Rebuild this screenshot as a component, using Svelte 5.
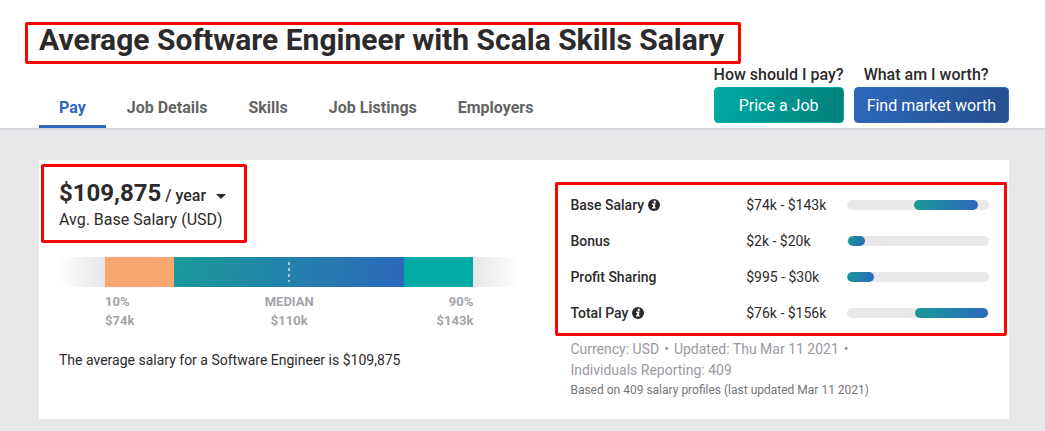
<script>
  const tabs = ['Pay', 'Job Details', 'Skills', 'Job Listings', 'Employers'];

  const actions = [
    { question: 'How should I pay?', label: 'Price a Job', kind: 'teal' },
    { question: 'What am I worth?', label: 'Find market worth', kind: 'blue' }
  ];

  // start and size are percentages of the track
  const rows = [
    { name: 'Base Salary', info: true, range: '$74k - $143k', start: 47, size: 45 },
    { name: 'Bonus', info: false, range: '$2k - $20k', start: 1, size: 12 },
    { name: 'Profit Sharing', info: false, range: '$995 - $30k', start: 0, size: 19 },
    { name: 'Total Pay', info: true, range: '$76k - $156k', start: 48, size: 51 }
  ];

  let active = $state('Pay');
</script>

<header>
  <h1 class="marked">Average Software Engineer with Scala Skills Salary</h1>

  <div class="bar">
    <nav>
      {#each tabs as tab}
        <a href="#{tab}" class:active={active === tab} onclick={() => (active = tab)}>{tab}</a>
      {/each}
    </nav>

    <div class="actions">
      {#each actions as action}
        <div class="action">
          <span>{action.question}</span>
          <button class={action.kind} type="button">{action.label}</button>
        </div>
      {/each}
    </div>
  </div>
</header>

<main>
  <section class="card">
    <div class="summary">
      <div class="marked average">
        <div class="amount">
          <strong>$109,875</strong>
          <button class="period" type="button">
            / year
            <svg width="10" height="5" viewBox="0 0 10 5" aria-hidden="true">
              <path d="M0 0h10L5 5z" fill="currentColor" />
            </svg>
          </button>
        </div>
        <p>Avg. Base Salary (USD)</p>
      </div>

      <div class="scale">
        <div class="fade-in"></div>
        <div class="low"></div>
        <div class="middle"><i></i></div>
        <div class="high"></div>
        <div class="fade-out"></div>
      </div>

      <div class="percentiles">
        <div>10%<br />$74k</div>
        <div>MEDIAN<br />$110k</div>
        <div>90%<br />$143k</div>
      </div>

      <p class="sentence">The average salary for a Software Engineer is $109,875</p>
    </div>

    <div class="details">
      <div class="marked ranges">
        <table>
          <tbody>
            {#each rows as row}
              <tr>
                <th scope="row">
                  {row.name}
                  {#if row.info}
                    <svg width="12" height="12" viewBox="0 0 12 12" aria-hidden="true">
                      <circle cx="6" cy="6" r="6" fill="#2d2a2b" />
                      <circle cx="6.7" cy="2.8" r="1.2" fill="#fff" />
                      <path d="M4.2 4.6h3.3L6.8 8.3h.9l-.2 1.3H3.9l.2-1.3h.7l.5-2.4h-1.3z" fill="#fff" />
                    </svg>
                  {/if}
                </th>
                <td class="range">{row.range}</td>
                <td>
                  <div class="track">
                    <div class="fill" style="margin-left: {row.start}%; width: {row.size}%"></div>
                  </div>
                </td>
              </tr>
            {/each}
          </tbody>
        </table>
      </div>

      <ul class="facts">
        <li>Currency: USD</li>
        <li>Updated: Thu Mar 11 2021</li>
        <li>Individuals Reporting: 409</li>
      </ul>
      <p class="source">Based on 409 salary profiles (last updated Mar 11 2021)</p>
    </div>
  </section>
</main>

<style>
  :global(body) {
    background: #e8e8ea;
    color: #2d2a2b;
    font-family: Roboto, sans-serif;
    font-size: 14px;
  }

  p {
    margin: 0;
  }

  button {
    font: inherit;
    cursor: pointer;
  }

  .marked {
    border: 3px solid #ff0000;
    border-radius: 2px;
  }

  header {
    padding: 22px 36px 0 39px;
    border-bottom: 2px solid #d8d8dc;
    background: #fff;
  }

  h1 {
    width: fit-content;
    margin: 0 0 0 -14px;
    padding: 0 14px 6px 11px;
    font-size: 30px;
    font-weight: 700;
    line-height: 30px;
  }

  .bar {
    display: flex;
    align-items: flex-end;
    justify-content: space-between;
  }

  nav {
    display: flex;
    gap: 1px;
  }

  nav a {
    padding: 8px 20px 7px;
    border-bottom: 3px solid transparent;
    color: #646464;
    font-size: 16px;
    font-weight: 700;
    line-height: 20px;
    text-decoration: none;
  }

  nav a.active {
    border-color: #2d68bd;
    color: #2d68bd;
  }

  .actions {
    display: flex;
    gap: 10px;
    padding-bottom: 5px;
  }

  .action {
    display: flex;
    flex-direction: column;
    gap: 2px;
    font-size: 16px;
    font-weight: 500;
    line-height: 21px;
  }

  .action + .action span {
    padding-left: 10px;
  }

  .action button {
    height: 36px;
    padding: 0 12px;
    border: 1px solid;
    border-radius: 4px;
    color: #fff;
    font-weight: 400;
  }

  .action .teal {
    border-color: #00a9a3;
    background: linear-gradient(105deg, #00aba5, #007f79);
  }

  .action .blue {
    border-color: #2d68bd;
    background: linear-gradient(105deg, #2d68bd, #244f8c);
  }

  main {
    padding: 30px 36px 12px 39px;
  }

  .card {
    display: grid;
    grid-template-columns: 11fr 10fr;
    gap: 51px;
    padding: 4px 20px 20px;
    background: #fff;
  }

  .average {
    width: fit-content;
    margin-left: -18px;
    padding: 12px 18px 8px 15px;
    font-size: 16px;
    line-height: 25px;
  }

  .amount {
    display: flex;
    align-items: baseline;
    gap: 4px;
    line-height: 28px;
  }

  .amount strong {
    font-size: 24px;
    font-weight: 700;
  }

  .period {
    display: flex;
    align-items: center;
    gap: 10px;
    padding: 0;
    border: 0;
    background: none;
    color: inherit;
    font-weight: 500;
    line-height: 20px;
  }

  .scale {
    display: grid;
    grid-template-columns: 10fr 15fr 50fr 15fr 10fr;
    height: 30px;
    margin-top: 14px;
  }

  .fade-in {
    background: linear-gradient(90deg, #fff, #e6e6e9);
  }

  .low {
    background: #f8a76f;
  }

  .middle {
    display: flex;
    align-items: center;
    justify-content: center;
    background: linear-gradient(105deg, #199a97, #2d68bd);
  }

  .middle i {
    width: 2px;
    height: 20px;
    background: repeating-linear-gradient(#a4cbdc 0 3px, transparent 3px 6px);
  }

  .high {
    background: #00aba5;
  }

  .fade-out {
    background: linear-gradient(90deg, #e6e6e9, #fff);
  }

  .percentiles {
    display: grid;
    grid-template-columns: 1fr 1fr 1fr;
    margin-top: 5px;
    padding: 0 10%;
    color: #a5a3aa;
    font-size: 13px;
    font-weight: 700;
    line-height: 19px;
  }

  .percentiles div:nth-child(2) {
    text-align: center;
  }

  .percentiles div:nth-child(3) {
    text-align: right;
  }

  .sentence {
    margin-top: 20px;
    line-height: 20px;
  }

  .details {
    padding-top: 18px;
  }

  .ranges {
    margin: 0 -18px 0 -15px;
    padding: 2px 15px 2px 12px;
  }

  table {
    width: 100%;
    border-collapse: collapse;
    table-layout: fixed;
  }

  th,
  td {
    height: 36px;
    padding: 0;
    text-align: left;
  }

  th {
    width: 42%;
    font-weight: 500;
  }

  th svg {
    vertical-align: -1px;
  }

  .range {
    width: 24%;
  }

  .track {
    height: 10px;
    border-radius: 5px;
    background: #e8e8ea;
    overflow: hidden;
  }

  .fill {
    height: 10px;
    border-radius: 5px;
    background: linear-gradient(105deg, #199a97, #2d68bd);
  }

  .facts {
    display: flex;
    flex-wrap: wrap;
    margin: 3px 0 0;
    padding: 0;
    color: #9b99a0;
    line-height: 21px;
    list-style: none;
  }

  .facts li:not(:last-child)::after {
    content: '•';
    margin: 0 5px;
  }

  .source {
    color: #77757a;
    font-size: 12px;
    line-height: 18px;
  }
</style>
